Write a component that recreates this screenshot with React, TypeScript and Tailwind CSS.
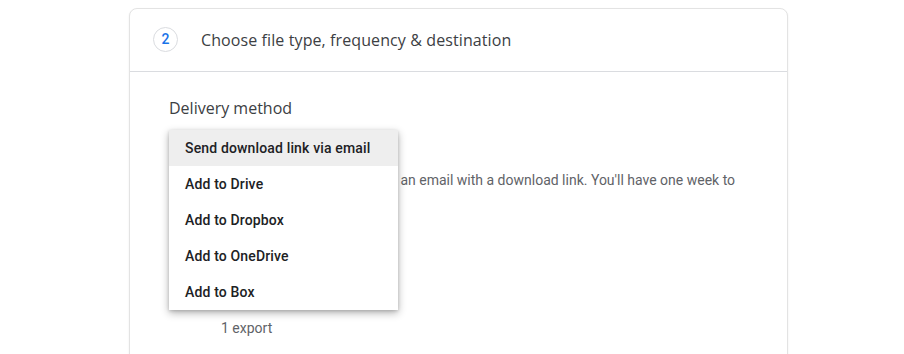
import React from "react";

const options = [
  "Send download link via email",
  "Add to Drive",
  "Add to Dropbox",
  "Add to OneDrive",
  "Add to Box",
];

export default function App() {
  return (
    <div className="w-[904px] h-[354px] overflow-hidden bg-white font-['Roboto',sans-serif]">
      <div className="ml-[129px] mt-[8px] w-[659px] h-[400px] rounded-[8px] border border-[#e3e3e3] shadow-[0_1px_2px_rgba(0,0,0,0.08)] bg-white">
        <div className="h-[63px] flex items-center pl-[23px] pb-[1px] border-b border-[#dadce0]">
          <div className="w-[25px] h-[25px] rounded-full border border-[#dadce0] flex items-center justify-center text-[14px] font-medium text-[#1a73e8] font-['Roboto',sans-serif]">
            2
          </div>
          <div className="ml-[23px] text-[16px] font-medium text-[#3c4043] font-['Open_Sans',sans-serif] tracking-[0.1px]">
            Choose file type, frequency &amp; destination
          </div>
        </div>
        <div className="relative pl-[39px] pr-[40px] pt-[25px]">
          <div className="text-[16px] font-medium text-[#3c4043] font-['Open_Sans',sans-serif] leading-[22px]">
            Delivery method
          </div>
          <div className="mt-[14px] h-[36px]" />
          <div className="text-[14px] text-[#5f6368] leading-[20px] mt-[1px]">
            Once your export's ready, you will get an email with a download link. You'll have one week to
            <br />
            download your files.
          </div>
          <div className="mt-[108px] ml-[52px] text-[14px] text-[#5f6368] leading-[20px]">
            1 export
          </div>

          <div className="absolute left-[39px] top-[58px] w-[229px] bg-white shadow-[0_3px_8px_rgba(0,0,0,0.3),0_1px_3px_rgba(0,0,0,0.15)]">
            {options.map((o, i) => (
              <div
                key={o}
                className={`h-[36px] flex items-center px-[16px] text-[14px] font-medium tracking-[0.15px] text-[#202124] ${
                  i === 0 ? "bg-[#eeeeee]" : ""
                }`}
              >
                {o}
              </div>
            ))}
          </div>
        </div>
      </div>
    </div>
  );
}
